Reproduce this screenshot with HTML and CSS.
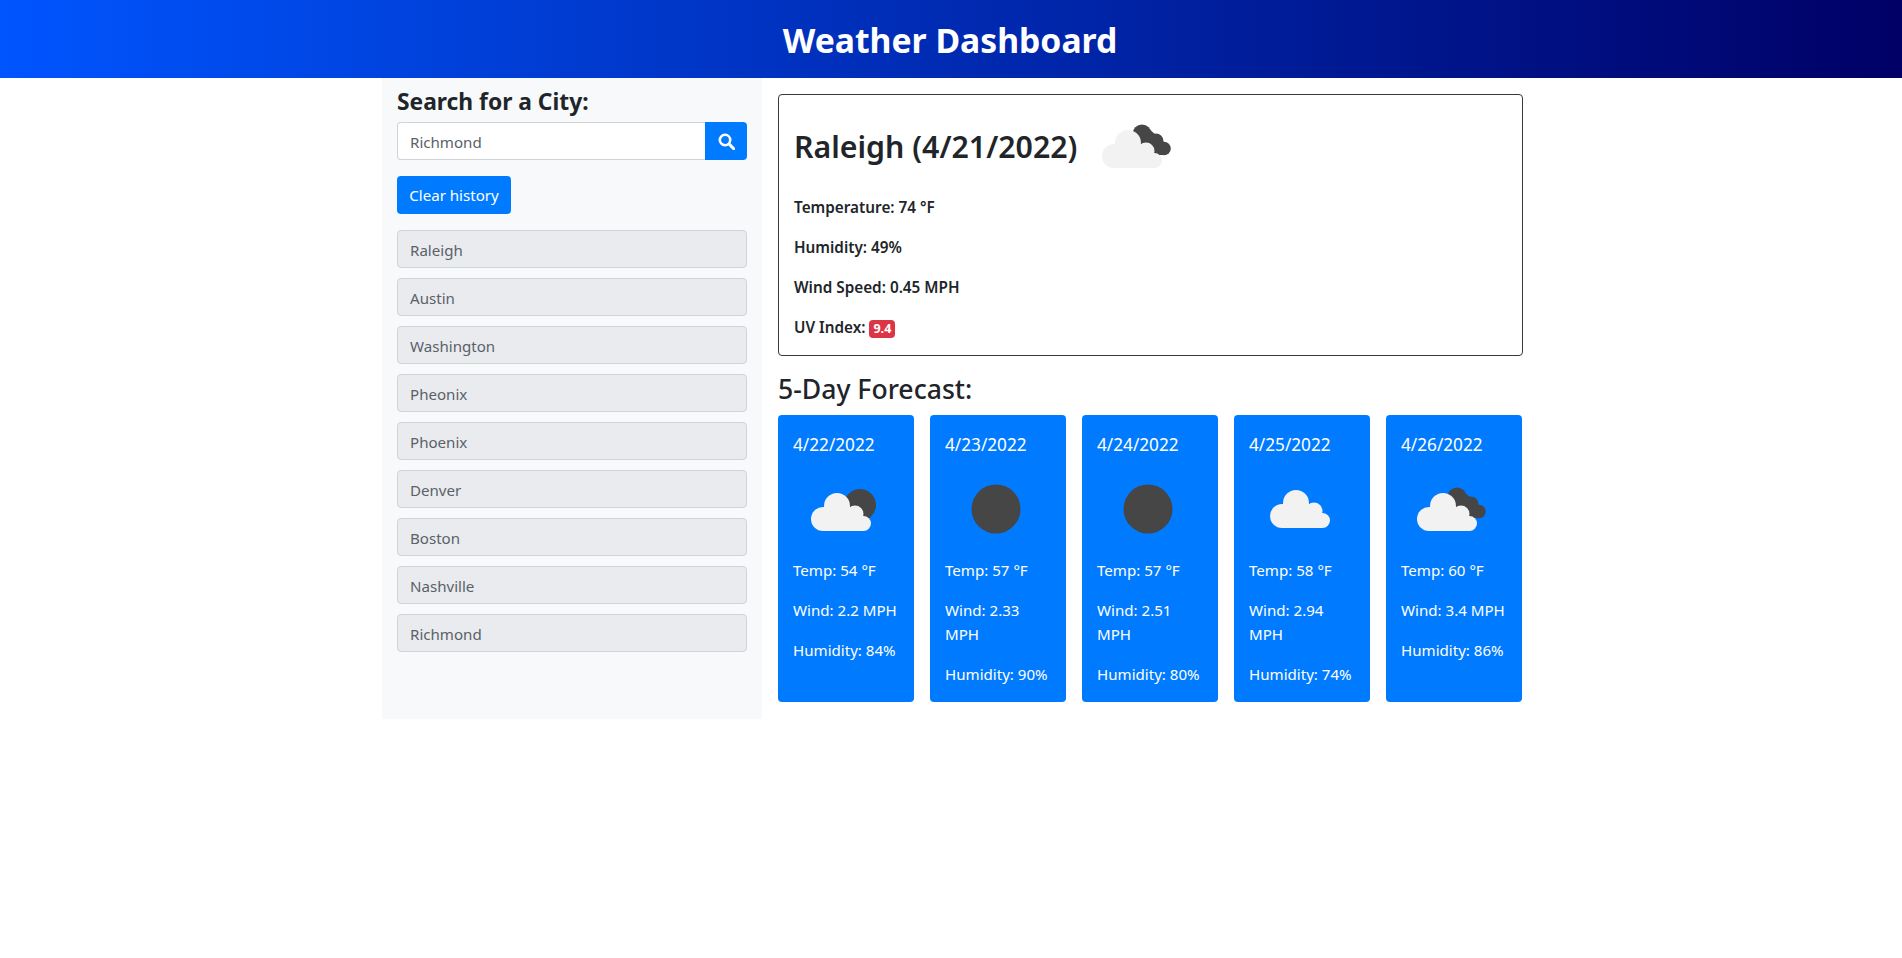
FILE: index.html
```html
<!DOCTYPE html>
<html lang="en">
<head>
<meta charset="utf-8">
<title>Weather Dashboard</title>
<link rel="stylesheet" href="styles.css">
</head>
<body>
<svg class="defs" width="0" height="0" aria-hidden="true">
  <defs>
    <symbol id="light-cloud" viewBox="0 0 60 38" overflow="visible">
      <g fill="currentColor">
        <circle cx="26" cy="13" r="13"/>
        <circle cx="12" cy="26" r="12"/>
        <circle cx="44" cy="21" r="8.5"/>
        <circle cx="52.5" cy="30.5" r="7.5"/>
        <path d="M12 14H44V38H12Z"/>
        <path d="M44 23H52.5V38H44Z"/>
      </g>
    </symbol>
    <symbol id="dark-cloud" viewBox="0 0 100 100">
      <g fill="#464646">
        <circle cx="56" cy="38" r="9.5"/>
        <circle cx="70" cy="45" r="7.5"/>
        <circle cx="78" cy="52.5" r="6.8"/>
        <path d="M50 40 62 32 78 46 78 59 60 59Z"/>
      </g>
    </symbol>
    <symbol id="icon-partly" viewBox="0 0 100 100">
      <circle cx="67" cy="46" r="16" fill="#464646"/>
      <use href="#light-cloud" x="18" y="34" width="60" height="38" color="#f2f2f2"/>
    </symbol>
    <symbol id="icon-sun" viewBox="0 0 100 100">
      <circle cx="51" cy="50" r="24.5" fill="#464646"/>
    </symbol>
    <symbol id="icon-cloud" viewBox="0 0 100 100">
      <use href="#light-cloud" x="21" y="31" width="60" height="38" color="#f2f2f2"/>
    </symbol>
    <symbol id="icon-broken" viewBox="0 0 100 100">
      <use href="#dark-cloud" x="0" y="0" width="100" height="100"/>
      <use href="#light-cloud" x="16" y="34" width="60" height="38" color="#f2f2f2"/>
    </symbol>
  </defs>
</svg>

<header class="site-header">
  <h1 class="site-title">Weather Dashboard</h1>
</header>

<div class="layout">
  <aside class="sidebar">
    <h2 class="search-title">Search for a City:</h2>
    <div class="search-row">
      <input class="search-input" type="text" value="Richmond" aria-label="City">
      <button class="search-button" type="button" aria-label="Search">
        <svg class="search-icon" viewBox="0 0 16 16" width="17" height="17">
          <circle cx="6.6" cy="6.6" r="4.9" fill="none" stroke="#fff" stroke-width="2.4"/>
          <path d="M10.3 10.3 14.8 14.8" stroke="#fff" stroke-width="2.9" stroke-linecap="round"/>
        </svg>
      </button>
    </div>
    <button class="clear-button" type="button">Clear history</button>
    <ul class="history">
      <li class="history-item">Raleigh</li>
      <li class="history-item">Austin</li>
      <li class="history-item">Washington</li>
      <li class="history-item">Pheonix</li>
      <li class="history-item">Phoenix</li>
      <li class="history-item">Denver</li>
      <li class="history-item">Boston</li>
      <li class="history-item">Nashville</li>
      <li class="history-item">Richmond</li>
    </ul>
  </aside>

  <main class="main">
    <section class="current">
      <div class="current-head">
        <h2 class="current-title">Raleigh (4/21/2022)</h2>
        <svg class="current-icon" width="100" height="100"><use href="#icon-broken"/></svg>
      </div>
      <p class="current-line">Temperature: 74 °F</p>
      <p class="current-line">Humidity: 49%</p>
      <p class="current-line">Wind Speed: 0.45 MPH</p>
      <p class="current-line last">UV Index: <span class="uv-badge">9.4</span></p>
    </section>

    <h3 class="forecast-title">5-Day Forecast:</h3>
    <div class="forecast">
      <article class="day">
        <h4 class="day-date">4/22/2022</h4>
        <svg class="day-icon" width="100" height="100"><use href="#icon-partly"/></svg>
        <p class="day-line">Temp: 54 °F</p>
        <p class="day-line">Wind: 2.2 MPH</p>
        <p class="day-line">Humidity: 84%</p>
      </article>
      <article class="day">
        <h4 class="day-date">4/23/2022</h4>
        <svg class="day-icon" width="100" height="100"><use href="#icon-sun"/></svg>
        <p class="day-line">Temp: 57 °F</p>
        <p class="day-line">Wind: 2.33 MPH</p>
        <p class="day-line">Humidity: 90%</p>
      </article>
      <article class="day">
        <h4 class="day-date">4/24/2022</h4>
        <svg class="day-icon" width="100" height="100"><use href="#icon-sun"/></svg>
        <p class="day-line">Temp: 57 °F</p>
        <p class="day-line">Wind: 2.51 MPH</p>
        <p class="day-line">Humidity: 80%</p>
      </article>
      <article class="day">
        <h4 class="day-date">4/25/2022</h4>
        <svg class="day-icon" width="100" height="100"><use href="#icon-cloud"/></svg>
        <p class="day-line">Temp: 58 °F</p>
        <p class="day-line">Wind: 2.94 MPH</p>
        <p class="day-line">Humidity: 74%</p>
      </article>
      <article class="day">
        <h4 class="day-date">4/26/2022</h4>
        <svg class="day-icon" width="100" height="100"><use href="#icon-broken"/></svg>
        <p class="day-line">Temp: 60 °F</p>
        <p class="day-line">Wind: 3.4 MPH</p>
        <p class="day-line">Humidity: 86%</p>
      </article>
    </div>
  </main>
</div>
</body>
</html>
```

FILE: styles.css
```css
* { box-sizing: border-box; }

body {
  margin: 0;
  background: #fff;
  color: #212529;
  font-family: "Noto Sans", "Open Sans", sans-serif;
  font-size: 15.1px;
  line-height: 24px;
}

.defs { position: absolute; }

.site-header {
  height: 78px;
  display: flex;
  align-items: center;
  justify-content: center;
  padding: 2px 2px 0 0;
  background: linear-gradient(to right, #0055ff, #000066);
}

.site-title {
  margin: 0;
  color: #fff;
  font-size: 33.7px;
  font-weight: 700;
  line-height: 1.2;
}

.layout {
  display: flex;
  margin-left: 382px;
}

.sidebar {
  width: 380px;
  padding: 9px 15px 16px;
  background: #f8f9fb;
}

.search-title {
  margin: 0 0 5px;
  font-size: 22.8px;
  font-weight: 700;
  line-height: 30px;
}

.search-row {
  display: flex;
  height: 38px;
  margin-bottom: 16px;
}

.search-input {
  flex: 1;
  min-width: 0;
  padding: 2px 12px 0;
  border: 1px solid #ced4da;
  border-right: 0;
  border-radius: 4px 0 0 4px;
  background: #fff;
  color: #5a6169;
  font: inherit;
}

.search-button {
  width: 42px;
  display: flex;
  align-items: center;
  justify-content: center;
  padding: 0;
  border: 0;
  border-radius: 0 4px 4px 0;
  background: #007bff;
}

.clear-button {
  display: block;
  width: 114px;
  height: 38px;
  padding: 0;
  border: 0;
  border-radius: 4px;
  background: #007bff;
  color: #fff;
  font: inherit;
}

.history {
  display: flex;
  flex-direction: column;
  gap: 10px;
  margin: 16px 0 0;
  padding: 0;
  list-style: none;
}

.history-item {
  height: 38px;
  padding: 7px 12px 5px;
  border: 1px solid #ced4da;
  border-radius: 4px;
  background: #e9ebee;
  color: #5a6169;
}

.main {
  width: 761px;
  padding: 16px 0 17px 16px;
}

.current {
  height: 262px;
  padding: 16px 16px 16px 15px;
  border: 1px solid #343a40;
  border-radius: 4px;
}

.current-head {
  display: flex;
  align-items: flex-start;
  height: 72px;
  margin-bottom: 12px;
}

.current-title {
  width: 282px;
  margin: 0 10px 0 0;
  font-size: 30.3px;
  font-weight: 600;
  line-height: 72px;
  white-space: nowrap;
}

.current-icon {
  flex: none;
  margin-top: -15px;
}

.current-line {
  margin: 0 0 16px;
  font-weight: 600;
  font-size: 15.3px;
}

.current-line.last { margin-bottom: 0; }

.uv-badge {
  display: inline-block;
  padding: 0 4px;
  border-radius: 4px;
  background: #dc3545;
  color: #fff;
  font-size: 12.5px;
  font-weight: 700;
  line-height: 18px;
}

.forecast-title {
  margin: 16px 0 8px;
  font-size: 26.6px;
  font-weight: 500;
  line-height: 35px;
}

.forecast {
  display: flex;
  gap: 16px;
}

.day {
  width: 136px;
  padding: 15px 15px 16px;
  border-radius: 4px;
  background: #007bff;
  color: #fff;
}

.day-date {
  margin: 0;
  font-size: 17.2px;
  font-weight: 400;
  line-height: 29px;
}

.day-icon {
  display: block;
  margin-bottom: -1px;
}

.day-line { margin: 0 0 16px; }

.day-line:last-child { margin-bottom: 0; }
```
